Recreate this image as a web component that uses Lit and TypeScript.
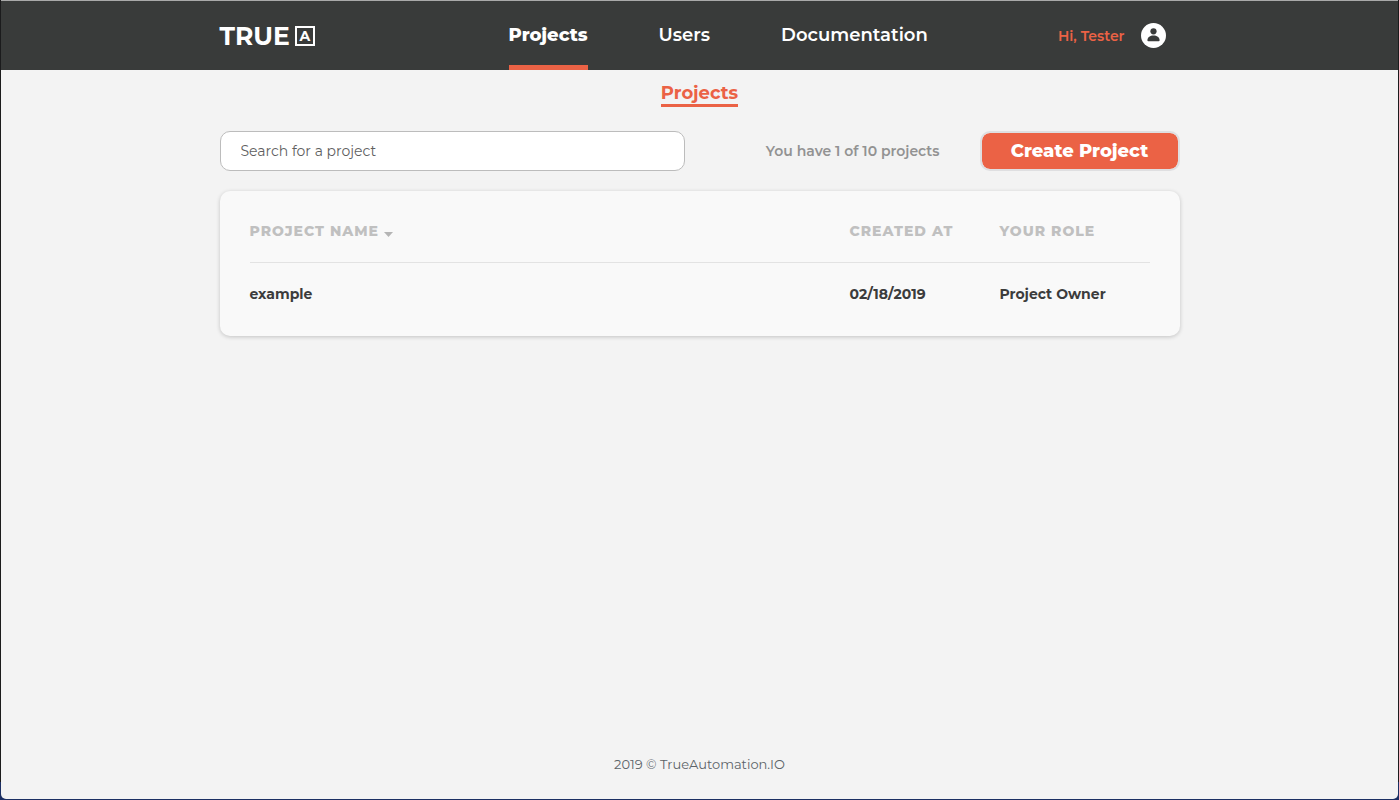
import { LitElement, html, css } from "lit";
import { customElement, state } from "lit/decorators.js";

interface Project {
  name: string;
  createdAt: string;
  role: string;
}

@customElement("app-root")
export class AppRoot extends LitElement {
  static styles = css`
    :host {
      display: block;
      min-height: 100vh;
      background: linear-gradient(#1b1b1c 0, #1b1b1c calc(100vh - 18px), #1c2f63 calc(100vh - 18px));
      font-family: Montserrat, Inter, sans-serif;
      font-size: 14px;
      line-height: 20px;
      color: #3c3c3c;
    }
    * {
      box-sizing: border-box;
    }
    a {
      color: inherit;
      text-decoration: none;
    }
    button,
    input {
      font: inherit;
    }
    .window {
      display: flex;
      flex-direction: column;
      min-height: calc(100vh - 1px);
      margin: 0 1px;
      background: #f3f3f3;
      border-radius: 0 0 5px 5px;
    }
    .container {
      width: 100%;
      max-width: 960px;
      margin: 0 auto;
    }
    .topbar {
      background: #393b3a;
      border-top: 1px solid #a9a9a9;
      color: #fff;
    }
    .topbar-row {
      display: grid;
      grid-template-columns: 289px 1fr auto;
      align-items: center;
      height: 69px;
      padding-right: 14px;
    }
    .logo {
      display: flex;
      align-items: center;
      gap: 5px;
      font-size: 25px;
      line-height: 26px;
      font-weight: 700;
    }
    .logo-mark {
      display: flex;
      align-items: center;
      justify-content: center;
      width: 20px;
      height: 20px;
      border: 2px solid #fff;
      font-size: 14px;
      line-height: 16px;
      font-weight: 700;
    }
    .nav {
      display: flex;
      gap: 71px;
      height: 100%;
      font-size: 18px;
      font-weight: 600;
    }
    .nav a {
      display: flex;
      align-items: center;
      border-bottom: 5px solid transparent;
      border-top: 4px solid transparent;
    }
    .nav a.active {
      font-weight: 800;
      border-bottom-color: #eb6245;
    }
    .user {
      display: flex;
      align-items: center;
      gap: 16px;
      color: #eb6245;
      font-weight: 600;
    }
    .user svg {
      display: block;
    }
    .main {
      flex: 1;
    }
    .title {
      display: table;
      margin: 12px auto 0;
      border-bottom: 3px solid #eb6245;
      color: #eb6245;
      font-size: 18px;
      line-height: 22px;
      font-weight: 700;
    }
    .toolbar {
      display: flex;
      align-items: center;
      margin-top: 24px;
    }
    .search {
      flex: 0 1 465px;
      min-width: 0;
      height: 40px;
      padding: 0 20px;
      border: 1px solid #bcbcbc;
      border-radius: 10px;
      background: #fff;
      color: #3c3c3c;
    }
    .search::placeholder {
      color: #5f5f5f;
      opacity: 1;
    }
    .quota {
      margin: 0 40px 0 auto;
      color: #929292;
      font-weight: 600;
    }
    .create {
      width: 200px;
      height: 40px;
      padding: 0;
      border: 2px solid #dfdfe1;
      border-radius: 10px;
      background: #eb6245;
      background-clip: padding-box;
      color: #fff;
      font-size: 18px;
      font-weight: 800;
    }
    .card {
      margin-top: 20px;
      padding: 0 30px 11px;
      border-radius: 10px;
      background: #f9f9f9;
      box-shadow: 0 1px 4px rgba(0, 0, 0, 0.2);
    }
    table {
      width: 100%;
      border-collapse: collapse;
      table-layout: fixed;
    }
    th,
    td {
      padding: 0;
      text-align: left;
    }
    th {
      height: 71px;
      padding-top: 9px;
      border-bottom: 1px solid #e3e3e3;
      color: #c0c0c0;
      font-weight: 800;
      letter-spacing: 1px;
    }
    td {
      height: 63px;
      font-weight: 700;
    }
    .narrow {
      width: 150px;
    }
    .sort {
      display: flex;
      align-items: center;
      gap: 5px;
      padding: 0;
      border: 0;
      background: none;
      color: inherit;
      letter-spacing: inherit;
    }
    .sort svg {
      margin-top: 7px;
    }
    .footer {
      padding: 24px 0 25px;
      text-align: center;
      color: #5c6368;
      font-size: 13px;
    }
  `;

  @state() private query = "";

  private projects: Project[] = [
    { name: "example", createdAt: "02/18/2019", role: "Project Owner" },
  ];

  private onSearch(e: Event) {
    this.query = (e.target as HTMLInputElement).value;
  }

  render() {
    const rows = this.projects.filter((p) => p.name.includes(this.query));
    return html`
      <div class="window">
        <header class="topbar">
          <div class="container topbar-row">
            <a class="logo" href="#">TRUE<span class="logo-mark">A</span></a>
            <nav class="nav">
              <a class="active" href="#projects">Projects</a>
              <a href="#users">Users</a>
              <a href="#documentation">Documentation</a>
            </nav>
            <a class="user" href="#profile">
              Hi, Tester
              <svg width="25" height="25" viewBox="0 0 25 25" aria-hidden="true">
                <circle cx="12.5" cy="12.5" r="12.5" fill="#fff" />
                <circle cx="12.5" cy="8.3" r="3.1" fill="#393b3a" />
                <path
                  d="M6.4 17.2C6.6 14.3 9.1 12.6 12.5 12.6S18.4 14.3 18.6 17.2Q18.6 18.2 17.6 18.2H7.4Q6.4 18.2 6.4 17.2Z"
                  fill="#393b3a"
                />
              </svg>
            </a>
          </div>
        </header>
        <main class="main container">
          <h1 class="title">Projects</h1>
          <div class="toolbar">
            <input
              class="search"
              type="text"
              aria-label="Search for a project"
              placeholder="Search for a project"
              .value=${this.query}
              @input=${this.onSearch}
            />
            <p class="quota">You have 1 of 10 projects</p>
            <button class="create" type="button">Create Project</button>
          </div>
          <section class="card">
            <table>
              <thead>
                <tr>
                  <th>
                    <button class="sort" type="button">
                      PROJECT NAME
                      <svg width="9" height="5" viewBox="0 0 9 5" aria-hidden="true">
                        <path d="M0 0H9L4.5 5Z" fill="#b5b5b5" />
                      </svg>
                    </button>
                  </th>
                  <th class="narrow">CREATED AT</th>
                  <th class="narrow">YOUR ROLE</th>
                </tr>
              </thead>
              <tbody>
                ${rows.map(
                  (p) => html`<tr>
                    <td><a href="#example">${p.name}</a></td>
                    <td>${p.createdAt}</td>
                    <td>${p.role}</td>
                  </tr>`
                )}
              </tbody>
            </table>
          </section>
        </main>
        <footer class="footer">2019 © TrueAutomation.IO</footer>
      </div>
    `;
  }
}
